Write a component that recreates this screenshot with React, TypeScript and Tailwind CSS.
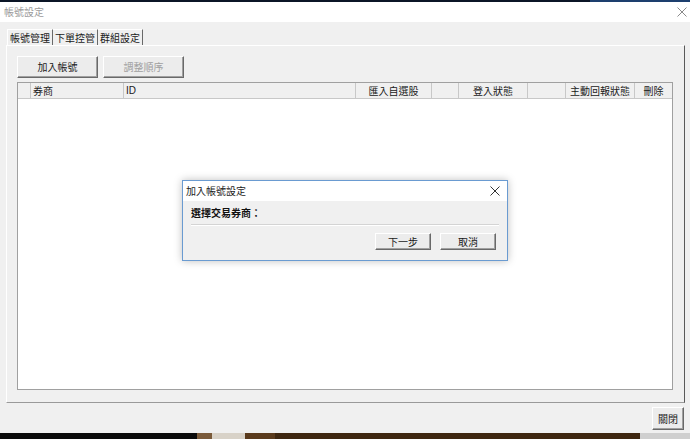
import React from "react";

const font = { fontFamily: '"Noto Sans CJK TC", "Noto Sans", sans-serif' };

function XIcon({ color, size = 10 }: { color: string; size?: number }) {
  return (
    <svg width={size} height={size} viewBox="0 0 10 10">
      <path d="M0.5 0.5 L9.5 9.5 M9.5 0.5 L0.5 9.5" stroke={color} strokeWidth="1" fill="none" />
    </svg>
  );
}

function Btn({ children, w, h, disabled }: { children: React.ReactNode; w: string; h: string; disabled?: boolean }) {
  return (
    <div
      className={`${w} ${h} flex items-center justify-center bg-[#ececec] border border-t-white border-l-white border-r-[#696969] border-b-[#696969] shadow-[inset_-1px_-1px_0_#a0a0a0] text-[10px] leading-none ${disabled ? "text-[#a0a0a0]" : "text-[#1a1a1a]"}`}
    >
      {children}
    </div>
  );
}

export default function App() {
  return (
    <div className="w-[690px] h-[439px] relative overflow-hidden bg-[#f0f0f0] flex flex-col" style={font}>
      {/* top strip */}
      <div className="h-[2px] flex">
        <div className="w-[590px] bg-[#0b1526]" />
        <div className="flex-1 bg-[#1d3f6e]" />
      </div>
      {/* title bar */}
      <div className="h-[20px] bg-white flex items-center justify-between pl-[4px] pr-[3px]">
        <span className="text-[10px] text-[#9a9a9a] leading-none">帳號設定</span>
        <XIcon color="#8a8a8a" size={10} />
      </div>
      {/* tabs */}
      <div className="pt-[7px] pl-[7px] flex h-[23px] items-end">
        <div className="h-[16px] w-[46px] flex items-center justify-center border-t border-l border-t-white border-l-white border-r border-r-[#696969] text-[10px] leading-none text-[#1a1a1a] bg-[#f0f0f0]">帳號管理</div>
        <div className="h-[16px] w-[45px] flex items-center justify-center border-t border-t-white border-r border-r-[#696969] text-[10px] leading-none text-[#1a1a1a]">下單控管</div>
        <div className="h-[16px] w-[45px] flex items-center justify-center border-t border-t-white border-r border-r-[#696969] text-[10px] leading-none text-[#1a1a1a]">群組設定</div>
      </div>
      {/* panel */}
      <div className="ml-[6px] mr-[5px] h-[358px] border border-t-white border-l-white border-r-[#5a5a5a] border-b-[#9a9a9a] bg-[#f0f0f0] pt-[10px] pl-[10px] pr-[11px] flex flex-col">
        <div className="flex gap-[5px]">
          <Btn w="w-[81px]" h="h-[22px]">加入帳號</Btn>
          <Btn w="w-[81px]" h="h-[22px]" disabled>調整順序</Btn>
        </div>
        <div className="mt-[4px] h-[308px] border border-[#a0a0a0] bg-white flex flex-col">
          <div className="h-[16px] flex bg-[#f0f0f0] border-b border-[#c8c8c8] text-[10px] leading-none text-[#1a1a1a]">
            <div className="w-[13px] border-r border-[#c8c8c8]" />
            <div className="w-[93px] border-r border-[#c8c8c8] flex items-center pl-[2px]">券商</div>
            <div className="w-[232px] border-r border-[#c8c8c8] flex items-center pl-[2px]" style={{ fontFamily: '"Liberation Sans", sans-serif' }}>ID</div>
            <div className="w-[76px] border-r border-[#c8c8c8] flex items-center justify-center">匯入自選股</div>
            <div className="w-[27px] border-r border-[#c8c8c8]" />
            <div className="w-[69px] border-r border-[#c8c8c8] flex items-center justify-center">登入狀態</div>
            <div className="w-[38px] border-r border-[#c8c8c8]" />
            <div className="w-[69px] border-r border-[#c8c8c8] flex items-center justify-center">主動回報狀態</div>
            <div className="flex-1 flex items-center justify-center">刪除</div>
          </div>
          <div className="flex-1 bg-white" />
        </div>
      </div>
      {/* bottom button */}
      <div className="flex justify-end pr-[6px] pt-[4px] h-[30px]">
        <Btn w="w-[32px]" h="h-[23px]">關閉</Btn>
      </div>
      {/* bottom strip (background app) */}
      <div className="h-[6px] flex">
        <div className="w-[197px] bg-[#0a0a0a]" />
        <div className="w-[15px] bg-[#7a5a3a]" />
        <div className="w-[33px] bg-[#d8d2c8]" />
        <div className="w-[30px] bg-[#5a3a1c]" />
        <div className="w-[365px] bg-[#3e2610]" />
        <div className="flex-1 bg-[#cfcfcf]" />
      </div>

      {/* modal dialog */}
      <div className="absolute left-[182px] top-[180px] w-[326px] h-[81px] border border-[#6a9bd1] bg-[#f0f0f0] shadow-[0_0_8px_rgba(0,0,0,0.25)] flex flex-col">
        <div className="h-[20px] bg-white flex items-center justify-between pl-[3px] pr-[7px]">
          <span className="text-[10px] leading-none text-[#1a1a1a]">加入帳號設定</span>
          <XIcon color="#333" size={10} />
        </div>
        <div className="flex-1 px-[8px] pt-[6px] flex flex-col">
          <div className="h-[12px] flex items-center text-[10px] leading-none text-[#111] font-bold">選擇交易券商：</div>
          <div className="mt-[5px] h-[2px] border-t border-[#d4d4d4] border-b border-b-white" />
          <div className="mt-[7px] flex justify-end gap-[9px] pr-[3px]">
            <Btn w="w-[56px]" h="h-[17px]">下一步</Btn>
            <Btn w="w-[56px]" h="h-[17px]">取消</Btn>
          </div>
        </div>
      </div>
    </div>
  );
}
